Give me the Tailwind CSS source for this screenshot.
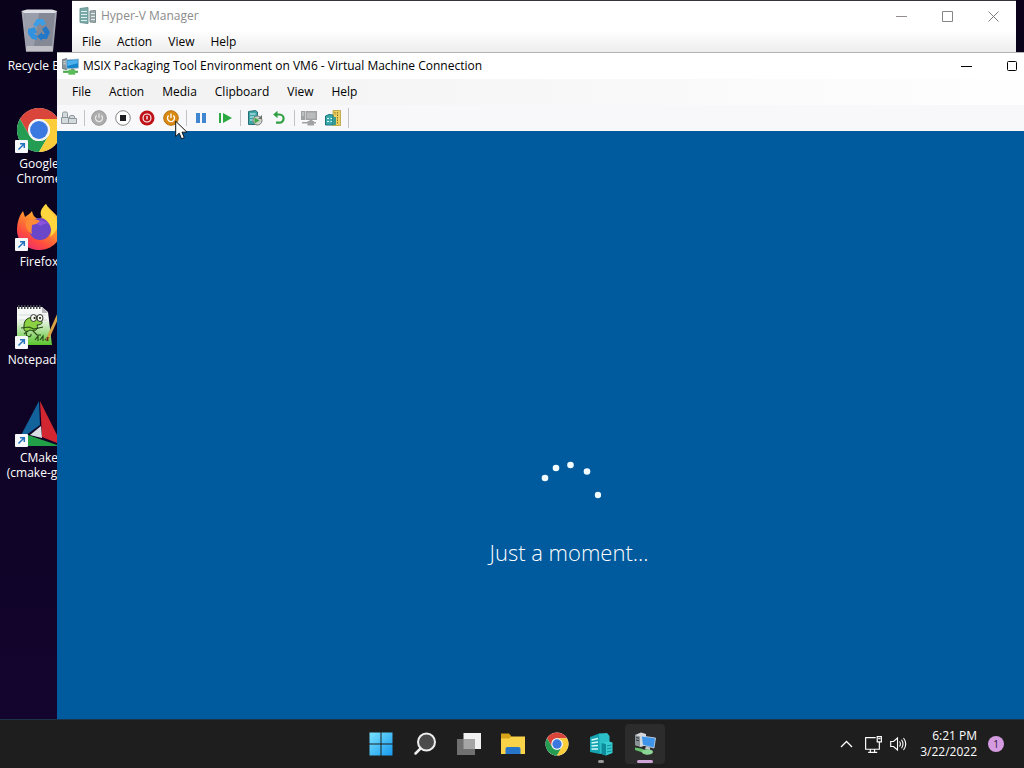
<!DOCTYPE html>
<html lang="en">
<head>
  <meta charset="UTF-8" />
  <title>Desktop</title>
  <script src="https://cdn.jsdelivr.net/npm/@tailwindcss/browser@4"></script>
</head>
<body class="h-screen overflow-hidden flex flex-col bg-linear-to-b from-[#09021a] to-[#14052f] text-xs font-['Open_Sans','Noto_Sans',sans-serif]">

  <!-- Shared symbols -->
  <svg class="hidden">
    <symbol id="chrome" viewBox="0 0 48 48">
      <circle cx="24" cy="24" r="23" fill="#f4f4f4"/>
      <path d="M4.100 12.500A23 23 0 0 1 43.900 12.500H24A11.500 11.500 0 0 0 14 18.200V29.700Z" fill="#d9453a"/>
      <path d="M4.100 12.500A23 23 0 0 0 24 47L34 29.700A11.500 11.500 0 0 1 14 29.700Z" fill="#249c52"/>
      <path d="M43.900 12.500A23 23 0 0 1 24 47L34 29.700A11.500 11.500 0 0 0 34 18.200L24 12.500Z" fill="#fbcd3b"/>
      <circle cx="24" cy="24" r="11.500" fill="#f4f4f4"/>
      <circle cx="24" cy="24" r="9.300" fill="#3b78e0"/>
    </symbol>
    <symbol id="shortcut" viewBox="0 0 13 13">
      <rect width="13" height="13" rx="1" fill="#f6f8fb"/>
      <path d="M3.500 9.500L9 4M5 3.700H9.300V8" fill="none" stroke="#2573bd" stroke-width="1.500"/>
    </symbol>
    <symbol id="vm" viewBox="0 0 16 16">
      <path d="M.5 1.500L4.500 .5V11L.5 10Z" fill="#8b969d" stroke="#4d5961" stroke-width=".6"/>
      <path d="M1.300 3.500H3.500M1.300 5.500H3.500" stroke="#e9eef2" stroke-width=".8"/>
      <path d="M4 1.800L15.500 1V9.500L4.500 10.200Z" fill="#1583c9" stroke="#9cb9ca" stroke-width=".8"/>
      <path d="M5 2.600L14.800 1.800V5L5 7.500Z" fill="#4fb0ee"/>
      <path d="M8.500 10H11.500V12H8.500Z" fill="#7d898f"/>
      <path d="M1 12H15V14H1Z" fill="#4aa84d"/>
      <path d="M6 11H12.500V15.700H6Z" fill="#5dbb58"/>
    </symbol>
  </svg>

  <main class="relative flex-1 overflow-hidden">
    <ul class="flex flex-col w-[78px] pt-[8px] text-white text-center leading-[15px]">
      <li class="h-[98px] flex flex-col items-center gap-[2px]">
        <svg class="size-[48px] shrink-0" viewBox="0 0 48 48">
          <path d="M6.500 3L42 3L38 43.500H11Z" fill="#a2a5b0"/>
          <path d="M6.500 3L12 1.500H37L42 3L40 5H9Z" fill="#dfe1e6"/>
          <path d="M9 5H40L37 38H12Z" fill="#858996"/>
          <path d="M9 5L24 5L19 38H12Z" fill="#9a9daa"/>
          <path d="M11.500 38H37.500L38 43.500H11Z" fill="#c0c0c6"/>
          <path d="M18 17L22 11H28L31 16L27 18L25 15L22 19Z" fill="#3b9de6"/>
          <path d="M31 18L35 24L32 31H27V33L22 28.500L27 24V26H30L27 21Z" fill="#2478c8"/>
          <path d="M13 21L20 19L22 25L19 25L22 28V32L17 31L13 26Z" fill="#3191df"/>
        </svg>
        <span class="whitespace-nowrap">Recycle Bin</span>
      </li>
      <li class="relative h-[98px] flex flex-col items-center gap-[2px]">
        <svg class="size-[46px] m-px shrink-0"><use href="#chrome"/></svg>
        <svg class="absolute left-[15px] top-[34px] size-[13px]"><use href="#shortcut"/></svg>
        <span>Google<br>Chrome</span>
      </li>
      <li class="relative h-[98px] flex flex-col items-center gap-[2px]">
        <svg class="size-[48px] shrink-0" viewBox="0 0 48 48">
          <defs>
            <linearGradient id="fox" x1=".8" y1="0" x2=".2" y2="1">
              <stop offset="0" stop-color="#ffe04a"/><stop offset=".4" stop-color="#ff9a2c"/><stop offset=".75" stop-color="#ff4a40"/><stop offset="1" stop-color="#e62a77"/>
            </linearGradient>
          </defs>
          <path d="M2 26C2 19 4 12 8 7L10 13C12 11 15 10 17 7C18 12 20 14 24 15L27 13C25 8 28 3 31 0C34 6 44 10 46 21C49 34 38 46 25 46C12 46 2 38 2 26Z" fill="url(#fox)"/>
          <circle cx="25" cy="25" r="11" fill="#6a46c8"/>
          <path d="M20 19C24 15 30 16 34 20C31 19 28 20 26 22Z" fill="#8b52dc"/>
          <path d="M11 17C15 14 21 15 25 17L21 20L17 21C17 24 16 27 17 30C12 28 10 22 11 17Z" fill="#ff8a36"/>
          <path d="M31 0C25 5 24 11 28 14C35 18 38 25 35 33C41 29 44 22 42 17C40 10 33 7 31 0Z" fill="#ffd63e"/>
        </svg>
        <svg class="absolute left-[15px] top-[34px] size-[13px]"><use href="#shortcut"/></svg>
        <span>Firefox</span>
      </li>
      <li class="relative h-[98px] flex flex-col items-center gap-[2px]">
        <svg class="size-[48px] shrink-0" viewBox="0 0 48 48">
          <defs><linearGradient id="note" x2="0" y2="1"><stop offset=".3" stop-color="#f6f8f5"/><stop offset="1" stop-color="#59c52c"/></linearGradient></defs>
          <path d="M2 5H27L33 10L37 43H2Z" fill="url(#note)"/>
          <path d="M4 13H31M4 18H32" stroke="#bdc7d0" stroke-width=".6"/>
          <path d="M3 5H27" stroke="#454a4e" stroke-width="4" stroke-dasharray="1.500 1.500"/>
          <path d="M27 5V11H33Z" fill="#b5b7bb"/>
          <path d="M9 24C9 17 14 15 18 16C20 13 25 14 25 18C29 20 27 23 22 23C24 28 19 30 15 28C11 31 8 29 9 24Z" fill="#8bd142" stroke="#213b16" stroke-width="1"/>
          <ellipse cx="18.500" cy="16" rx="3" ry="3.500" fill="#f3f8e9" stroke="#222" stroke-width=".9"/>
          <ellipse cx="25" cy="16" rx="3" ry="3.500" fill="#f3f8e9" stroke="#222" stroke-width=".9"/>
          <circle cx="19.500" cy="16" r="1" fill="#111"/><circle cx="25" cy="16" r="1" fill="#111"/>
          <path d="M6 26L14 25L19 27L28 25M13 29L9 32M18 29L22 33H26M12 29C9 36 17 36 16 32M20 38L23 34V39M25 38L28 34V39M30 38L33 35V39" fill="none" stroke="#294b19" stroke-width="1.200"/>
          <path d="M32 38L46 7" stroke="#d8a345" stroke-width="3"/>
          <path d="M32 39L33 35" stroke="#55341b" stroke-width="1.500"/>
        </svg>
        <svg class="absolute left-[15px] top-[34px] size-[13px]"><use href="#shortcut"/></svg>
        <span class="whitespace-nowrap">Notepad++</span>
      </li>
      <li class="relative h-[98px] flex flex-col items-center gap-[2px]">
        <svg class="size-[48px] shrink-0" viewBox="0 0 48 48">
          <path d="M24 1L3 41L25 25Z" fill="#12629c"/>
          <path d="M25 1L47 45L27 37Z" fill="#d22730"/>
          <path d="M2 43L13 35L45 46H2Z" fill="#21a047"/>
          <path d="M26 26L15 35L27 38Z" fill="#d9dde4"/>
        </svg>
        <svg class="absolute left-[15px] top-[34px] size-[13px]"><use href="#shortcut"/></svg>
        <span class="whitespace-nowrap">CMake<br>(cmake-gui)</span>
      </li>
    </ul>

    <!-- Hyper-V Manager -->
    <section class="absolute left-[72px] right-[8px] top-0 h-[72px] bg-white border-t border-[#35323a]">
      <header class="flex items-center h-[30px] pl-[7px] text-[#8c8c8c]">
        <svg class="size-[18px] mr-1" viewBox="0 0 18 18">
          <path d="M1 1.500L9 .5V16.500L1 15.500Z" fill="#79aaa7" stroke="#6b9694"/>
          <path d="M2 4.500H8M2 7.500H8M2 10.500H8M2 13.500H8" stroke="#dcefee"/>
          <path d="M11 4L16.500 3.500V15.500L11 15Z" fill="#9caaac" stroke="#7d8d8f"/>
          <path d="M12 6.500H16M12 9.500H16M12 12.500H16" stroke="#e0eaea"/>
        </svg>
        <h2 class="flex-1">Hyper-V Manager</h2>
        <button class="w-[46px] h-full flex items-center justify-center" aria-label="Minimize"><svg class="size-[11px]" viewBox="0 0 11 11"><path d="M0 5.500H11" stroke="#958c8c"/></svg></button>
        <button class="w-[46px] h-full flex items-center justify-center" aria-label="Maximize"><svg class="size-[11px]" viewBox="0 0 11 11" fill="none"><path d="M.5.5H10.500V10.500H.5Z" stroke="#858585"/></svg></button>
        <button class="w-[46px] h-full flex items-center justify-center" aria-label="Close"><svg class="size-[11px]" viewBox="0 0 11 11"><path d="M.5.5L10.500 10.500M10.500.5L.5 10.500" stroke="#7c7c7c"/></svg></button>
      </header>
      <nav class="flex h-[22px] pl-[2px] bg-linear-to-b from-white to-[#ececec]">
        <button class="px-2">File</button>
        <button class="px-2">Action</button>
        <button class="px-2">View</button>
        <button class="px-2">Help</button>
      </nav>
    </section>

    <!-- Virtual machine window, runs past the right edge of the screen -->
    <section class="absolute left-[57px] -right-[57px] top-[52px] bottom-0 flex flex-col bg-white border-t border-[#b4b4b4]">
      <header class="flex items-center h-[26px] pl-[5px]">
        <svg class="size-[17px] mr-1"><use href="#vm"/></svg>
        <h1 class="flex-1">MSIX Packaging Tool Environment on VM6 - Virtual Machine Connection</h1>
        <button class="w-[46px] h-full flex items-center justify-center" aria-label="Minimize"><svg class="size-[11px]" viewBox="0 0 11 11"><path d="M0 5.500H11" stroke="#000"/></svg></button>
        <button class="w-[46px] h-full flex items-center justify-center" aria-label="Maximize"><svg class="size-[11px]" viewBox="0 0 11 11" fill="none"><rect x=".5" y=".5" width="9" height="9" rx="1" stroke="#000"/></svg></button>
        <button class="w-[46px] h-full flex items-center justify-center" aria-label="Close"><svg class="size-[11px]" viewBox="0 0 11 11"><path d="M.5.5L10.500 10.500M10.500.5L.5 10.500" stroke="#000"/></svg></button>
      </header>
      <nav class="flex h-[26px] pl-[6px] bg-linear-to-r from-[#f1f1f1] to-white">
        <button class="px-[9px]">File</button>
        <button class="px-[9px]">Action</button>
        <button class="px-[9px]">Media</button>
        <button class="px-[9px]">Clipboard</button>
        <button class="px-[9px]">View</button>
        <button class="px-[9px]">Help</button>
      </nav>
      <div class="flex items-center h-[26px] bg-[#f8f8fa]">
        <button class="w-6 flex justify-center" aria-label="Ctrl+Alt+Delete">
          <svg class="size-4" viewBox="0 0 16 16" fill="#d5dadd" stroke="#8d979e"><path d="M1.500 7.500V3.500Q1.500 2 3 2H5Q6.500 2 6.500 3.500V7.500ZM.5 7.500H7.500V13.500H.5ZM8.500 9V7Q8.500 5.500 10 5.500H12Q13.500 5.500 13.500 7V9M7.500 8.500H15.500V13.500H7.500Z"/></svg>
        </button>
        <span class="w-px h-4 ml-[3px] mr-[2px] bg-[#c3c3c3]"></span>
        <button class="w-6 flex justify-center" aria-label="Start">
          <svg class="size-4" viewBox="0 0 16 16" fill="none"><circle cx="8" cy="8" r="7.300" fill="#adadad" stroke="#989898"/><path d="M5.600 5.500A3.500 3.500 0 1 0 10.400 5.500M8 3.500V8" stroke="#e9e9e9" stroke-width="1.200"/></svg>
        </button>
        <button class="w-6 flex justify-center" aria-label="Turn off">
          <svg class="size-4" viewBox="0 0 16 16"><circle cx="8" cy="8" r="7.300" fill="#fff" stroke="#858585"/><path d="M5 5H11V11H5Z" fill="#1d1d24"/></svg>
        </button>
        <button class="w-6 flex justify-center" aria-label="Shut down">
          <svg class="size-4" viewBox="0 0 16 16" fill="none"><circle cx="8" cy="8" r="7.500" fill="#c01219"/><circle cx="8" cy="8" r="4" stroke="#fff" stroke-width="1.100"/><path d="M8 6V9.500" stroke="#fff" stroke-width="1.300"/></svg>
        </button>
        <button class="w-6 flex justify-center" aria-label="Save">
          <svg class="size-4" viewBox="0 0 16 16" fill="none"><circle cx="8" cy="8" r="7.300" fill="#d88912" stroke="#b8700d"/><path d="M5.600 5.500A3.500 3.500 0 1 0 10.400 5.500M8 3.500V8" stroke="#fff" stroke-width="1.300"/></svg>
        </button>
        <span class="w-px h-4 ml-[3px] mr-[2px] bg-[#c3c3c3]"></span>
        <button class="w-6 flex justify-center" aria-label="Pause">
          <svg class="size-4" viewBox="0 0 16 16"><path d="M3 3H7V13H3ZM9 3H13V13H9Z" fill="#4186d0"/></svg>
        </button>
        <button class="w-6 flex justify-center" aria-label="Reset">
          <svg class="size-4" viewBox="0 0 16 16"><path d="M2 3H4V13H2ZM6 3L15 8L6 13Z" fill="#2da943"/></svg>
        </button>
        <span class="w-px h-4 ml-[3px] mr-[2px] bg-[#c3c3c3]"></span>
        <button class="w-6 flex justify-center" aria-label="Checkpoint">
          <svg class="size-4" viewBox="0 0 16 16"><path d="M1.500 1.500L8.500.5L10.500 2V14.500H1.500Z" fill="#3fa5a8" stroke="#266f76"/><path d="M3 4H8.500M3 7H7M3 10H6" stroke="#d9f4f2"/><circle cx="10.500" cy="10.500" r="4.500" fill="#cfd3cd" stroke="#777c75"/><path d="M7.500 7.500L12.500 10.500L7.500 13.500Z" fill="#3fa646"/><path d="M11 9L15 5V9Z" fill="#6a6f6a"/></svg>
        </button>
        <button class="w-6 flex justify-center" aria-label="Revert">
          <svg class="size-4" viewBox="0 0 16 16" fill="none"><path d="M4 4.500H8.500A4 4 0 0 1 8.500 12.700H5" stroke="#2f9f42" stroke-width="2.200"/><path d="M6.500.8V8.200L2.200 4.500Z" fill="#2f9f42"/></svg>
        </button>
        <span class="w-px h-4 ml-[3px] mr-[2px] bg-[#c3c3c3]"></span>
        <button class="w-6 flex justify-center" aria-label="Enhanced session">
          <svg class="size-4" viewBox="0 0 16 16"><path d="M0 1H4V10H0ZM4.500 1H16V10H4.500ZM8.500 10H11.500V12H8.500ZM1 12H15V13.500H1ZM6.500 11H13V15.500H6.500Z" fill="#a0a2a4"/><path d="M6 2.500H14.500V8.500H6Z" fill="#b9bbbc"/><path d="M1 3H3M1 5H3" stroke="#ddd"/></svg>
        </button>
        <button class="w-6 flex justify-center" aria-label="Share">
          <svg class="size-4" viewBox="0 0 16 16"><path d="M8 .5H15.500V15.500H8Z" fill="#eccf62" stroke="#b2932a" stroke-width=".7"/><path d="M12.500 2V14M10 2V5" stroke="#8b7120" stroke-dasharray="1.500 1"/><path d="M.5 6L4 4.500L8 5V15H.5Z" fill="#39a9ae" stroke="#1c747c"/><path d="M2 8.500H4M5.500 8.500H7M2 11.500H4M5.500 11.500H7" stroke="#e4fafa"/><path d="M8 7H11V15H8Z" fill="#389b91"/></svg>
        </button>
        <span class="w-px h-5 ml-[3px] mr-[2px] bg-[#c3c3c3]"></span>
      </div>
      <div class="flex-1 flex flex-col items-center pt-[330px] bg-[#005a9e] text-white">
        <svg class="size-[64px]" viewBox="0 0 64 64" fill="#f2fcff">
          <circle cx="8" cy="17" r="3.300"/><circle cx="19" cy="7" r="3.300"/><circle cx="33.500" cy="4" r="3.300"/><circle cx="50" cy="10.500" r="3.300"/><circle cx="61" cy="34" r="3.200"/>
        </svg>
        <p class="mt-[11px] text-[22px] leading-8 font-light">Just a moment...</p>
      </div>
    </section>

    <!-- Mouse pointer -->
    <svg class="absolute left-[175px] top-[120px] w-[13px] h-[20px]" viewBox="0 0 13 20"><path d="M.7 1.200V16.500L4.200 13.200L6.500 18.800L9.300 17.600L7 12.200H12Z" fill="#fff" stroke="#111"/></svg>
  </main>

  <footer class="grid grid-cols-[1fr_auto_1fr] items-center h-[49px] border-t border-[#1d3347] bg-[#1e1e1e] text-white">
    <div></div>
    <div class="flex gap-1 pl-[2px]">
      <button class="size-10 flex items-center justify-center" aria-label="Start">
        <svg class="size-6" viewBox="0 0 24 24"><defs><linearGradient id="win" gradientUnits="userSpaceOnUse" x1="0" y1="0" x2="24" y2="24"><stop stop-color="#7be5ff"/><stop offset="1" stop-color="#1597ee"/></linearGradient></defs><path d="M.5.500H11.500V11.500H.5ZM12.500.5H23.500V11.500H12.500ZM.5 12.500H11.500V23.500H.5ZM12.500 12.500H23.500V23.500H12.500Z" fill="url(#win)"/></svg>
      </button>
      <button class="size-10 flex items-center justify-center" aria-label="Search">
        <svg class="size-6" viewBox="0 0 24 24"><circle cx="13.500" cy="10" r="8.500" fill="#4b4b4b" stroke="#eee" stroke-width="2"/><path d="M7.500 16.500L2.500 21.500" stroke="#eee" stroke-width="2.500" stroke-linecap="round"/></svg>
      </button>
      <button class="size-10 flex items-center justify-center" aria-label="Task view">
        <svg class="size-6" viewBox="0 0 24 24"><path d="M6.500 1H24V17H6.500Z" fill="#f1f1f1"/><path d="M0 7H18V23H0Z" fill="#707070"/><path d="M6.500 7H18V17H6.500Z" fill="#a5a5a5"/></svg>
      </button>
      <button class="size-10 flex items-center justify-center" aria-label="File Explorer">
        <svg class="size-6" viewBox="0 0 24 24"><path d="M0 1.500H8L11 5H22V9H0Z" fill="#d8a51a"/><path d="M0 6.500H8L11 4.500H24V22H0Z" fill="#fbd349"/><path d="M4.500 22V17Q4.500 15 6.500 15H17.500Q19.500 15 19.500 17V22Z" fill="#2876c9"/></svg>
      </button>
      <button class="size-10 flex items-center justify-center" aria-label="Google Chrome">
        <svg class="size-6"><use href="#chrome"/></svg>
      </button>
      <button class="relative size-10 flex items-center justify-center" aria-label="Hyper-V Manager">
        <svg class="size-6" viewBox="0 0 24 24"><path d="M1 5L10 1.500L11 3V22L1 20Z" fill="#14a3b1"/><path d="M10 1.500L18 1L20.500 4V19L11 22Z" fill="#2bc0c9"/><path d="M2.500 8L9 6.500M2.500 11L9 10M2.500 14L9 13.500M2.500 17L9 17" stroke="#d4fbfb" stroke-width="1.600"/><path d="M12.500 11L20 9.500L23.500 10.500V21L17 23.500L12.500 22Z" fill="#35cdd2"/><path d="M12.500 11L17 12V23.500L12.500 22Z" fill="#0f8c99"/><path d="M18 14L22.500 13M18 17L22.500 16M18 20L22.500 19" stroke="#118e98" stroke-width="1"/></svg>
        <span class="absolute bottom-[1px] w-[6px] h-[3px] rounded-full bg-[#989898]"></span>
      </button>
      <button class="relative size-10 flex items-center justify-center rounded bg-[#2c2c2c]" aria-label="Virtual Machine Connection">
        <svg class="size-6" viewBox="0 0 24 24"><path d="M2 3L8 .5L13 2V13L8 15L2 13Z" fill="#d3d7da"/><path d="M2 3L7 4.500V14.500L2 13Z" fill="#8a9298"/><path d="M3 5.500L6 6.300M3 8L6 8.800" stroke="#30363a"/><path d="M8.500 4L22.500 6L21 16L9.500 13Z" fill="#3d94e8" stroke="#cfdce6" stroke-width=".8"/><path d="M13 14.500L17 15.500V18L12 17Z" fill="#c5cccf"/><path d="M2 15.500L8 16.500L18 20.500L14 22.500L8 20L2 18Z" fill="#66bf6c"/><ellipse cx="14.500" cy="20" rx="5.500" ry="2.700" fill="#8bd596"/></svg>
        <span class="absolute bottom-[1px] w-4 h-[3px] rounded-full bg-[#cfa5d8]"></span>
      </button>
    </div>
    <div class="flex items-center justify-end pr-5">
      <button class="mr-3" aria-label="Show hidden icons"><svg class="w-[13px] h-2" viewBox="0 0 13 8" fill="none"><path d="M1 7L6.500 1.500L12 7" stroke="#fff" stroke-width="1.300"/></svg></button>
      <button class="mr-2" aria-label="Network"><svg class="w-[17px] h-[17px]" viewBox="0 0 16 16" fill="none" stroke="#fff" stroke-width="1.100"><path d="M10 1.500H.6V12.500H13.500V8M5 12.500V15.400M9 12.500V15.400M3 15.400H11.500M11.500.6H15.400V5.500H11.500ZM13.500 5.500V9M12.500 2.500H14.500"/></svg></button>
      <button class="mr-[13px]" aria-label="Volume"><svg class="w-[17px] h-4" viewBox="0 0 17 16" fill="none" stroke="#fff" stroke-width="1.100"><path d="M.7 5.500H3.500L7.500 2V14L3.500 10.500H.7ZM9.500 5.500Q11.300 8 9.500 10.500M11.500 3.700Q14.500 8 11.500 12.300M13.500 2Q18 8 13.500 14"/></svg></button>
      <time class="mr-[11px] text-right leading-4">6:21 PM<br>3/22/2022</time>
      <span class="size-4 rounded-full bg-[#d49be0] text-[#2b1832] text-[10px] leading-4 text-center">1</span>
    </div>
  </footer>
</body>
</html>
